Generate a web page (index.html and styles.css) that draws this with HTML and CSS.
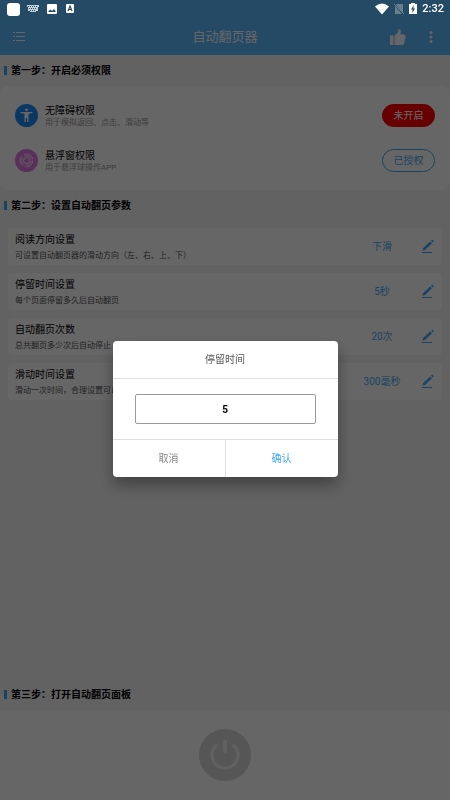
FILE: index.html
```html
<!DOCTYPE html>
<html lang="zh-CN">
<head>
<meta charset="utf-8">
<meta name="viewport" content="width=device-width, initial-scale=1">
<title>自动翻页器</title>
<link rel="stylesheet" href="styles.css">
</head>
<body>
<svg class="symbols" aria-hidden="true">
  <symbol id="pencil" viewBox="0 0 14 16">
    <path d="M2.200 9 9.200 2.500l1.800 1.800L4 11l-2.600.8zM10 1.800l.9-.9q.5-.4.9 0l.8.8q.4.500 0 .9l-.9.9z"/>
    <path d="M1 13h10v1H1z"/>
  </symbol>
</svg>
<div class="statusbar">
  <div class="notices">
    <span class="notice-app"></span>
    <svg width="12" height="12" viewBox="0 0 12 12"><path fill="#c5d0d8" d="M0 2h12v2h-1v4H9v1H3V8H1V4H0z"/><path stroke="#244a66" stroke-dasharray="1 1" d="M1 3.500h10M2 5.500h8M3 7.500h6"/></svg>
    <svg width="12" height="12" viewBox="0 0 12 12"><rect x="1" y="1" width="10" height="10" rx="1" fill="#fff"/><path fill="#244a66" d="M2.500 9V8l2-1.500L6 8l2-2 1.500 2v1z"/></svg>
    <svg width="10" height="12" viewBox="0 0 10 12"><rect x="1" y="1" width="8" height="9" rx="1" fill="#fff"/><path fill="none" stroke="#244a66" stroke-width="1.200" d="M3 8l2-5 2 5M3.600 6.500h2.800"/></svg>
  </div>
  <div class="signals">
    <svg width="14" height="12" viewBox="0 0 14 12"><path fill="#fff" d="M0 3.500Q7-2.500 14 3.500L7 11.500z"/></svg>
    <svg width="10" height="12" viewBox="0 0 10 12"><path fill="#66808f" d="M3 1h6v9L2 2zM1 3l7 8H1z"/><path stroke="#66808f" d="M0 1l10 10"/></svg>
    <svg width="8" height="12" viewBox="0 0 8 12"><path fill="#fff" d="M0 1h2V0h4v1h2v10H0z"/><path fill="#244a66" d="M4.800 2 2 6.500h1.600L3.200 10 6 5.500H4.400z"/></svg>
    <time>2:32</time>
  </div>
</div>
<div class="screen">
  <header class="topbar">
    <button class="icon-btn" aria-label="列表"><svg width="12" height="12" viewBox="0 0 12 12"><path stroke="#fff" fill="none" d="M0 1.500h2M3 1.500h9M0 5.500h2M3 5.500h9M0 9.500h2M3 9.500h9"/></svg></button>
    <h1>自动翻页器</h1>
    <div class="actions">
      <button class="icon-btn" aria-label="点赞"><svg width="16" height="18" viewBox="0 0 16 18"><path fill="#fff" d="M0 7.500h3.500V17H0zM4.500 7.500 8 4.500 8.500 1.500Q10.500.5 11 3L10.500 6.500H14Q16 7 15.500 9L14 15.500Q13.500 17 12 17H4.500z"/></svg></button>
      <button class="icon-btn" aria-label="更多"><svg width="4" height="14" viewBox="0 0 4 14"><g fill="#fff"><circle cx="2" cy="2.500" r="1.500"/><circle cx="2" cy="7" r="1.500"/><circle cx="2" cy="11.500" r="1.500"/></g></svg></button>
    </div>
  </header>
  <main>
    <h2>第一步：开启必须权限</h2>
    <section class="card">
      <div class="perm">
        <svg width="23" height="23" viewBox="0 0 23 23"><circle cx="11.500" cy="11.500" r="11.500" fill="#1b8df5"/><g fill="#fff"><circle cx="11.500" cy="5.800" r="1.400"/><path d="M5.500 8h12v1l-4 .7v8.300h-1.300v-4h-1.400v4H9.500V9.700l-4-.7z"/></g></svg>
        <div class="text"><h3>无障碍权限</h3><p>用于模拟返回、点击、滑动等</p></div>
        <button class="pill pill-off">未开启</button>
      </div>
      <div class="perm">
        <svg width="23" height="23" viewBox="0 0 23 23"><circle cx="11.500" cy="11.500" r="11.500" fill="#e375e3"/><g fill="none" stroke="#fff" stroke-width=".8"><circle cx="11.500" cy="11.500" r="3"/><circle cx="11.500" cy="11.500" r="4.700" stroke-dasharray="8 1.800"/><circle cx="11.500" cy="11.500" r="6.400" stroke-dasharray="11 2.400"/></g></svg>
        <div class="text"><h3>悬浮窗权限</h3><p>用于悬浮球操作APP</p></div>
        <button class="pill">已授权</button>
      </div>
    </section>
    <h2>第二步：设置自动翻页参数</h2>
    <section class="settings">
      <div class="row"><div class="text"><h3>阅读方向设置</h3><p>可设置自动翻页器的滑动方向（左、右、上、下）</p></div><span class="value">下滑</span><button class="icon-btn edit" aria-label="编辑"><svg width="14" height="16"><use href="#pencil"/></svg></button></div>
      <div class="row"><div class="text"><h3>停留时间设置</h3><p>每个页面停留多久后自动翻页</p></div><span class="value">5秒</span><button class="icon-btn edit" aria-label="编辑"><svg width="14" height="16"><use href="#pencil"/></svg></button></div>
      <div class="row"><div class="text"><h3>自动翻页次数</h3><p>总共翻页多少次后自动停止</p></div><span class="value">20次</span><button class="icon-btn edit" aria-label="编辑"><svg width="14" height="16"><use href="#pencil"/></svg></button></div>
      <div class="row"><div class="text"><h3>滑动时间设置</h3><p>滑动一次时间，合理设置可以</p></div><span class="value">300毫秒</span><button class="icon-btn edit" aria-label="编辑"><svg width="14" height="16"><use href="#pencil"/></svg></button></div>
    </section>
    <h2 class="last">第三步：打开自动翻页面板</h2>
  </main>
  <footer>
    <button class="power" aria-label="打开面板"><svg width="32" height="32" viewBox="0 0 32 32"><path fill="none" stroke="#fff" stroke-opacity=".7" stroke-width="3" stroke-linecap="round" d="M7 6.700a13 13 0 1 0 18 0"/><path stroke="#fff" stroke-opacity=".7" stroke-width="4" stroke-linecap="round" d="M16 3v9"/></svg></button>
  </footer>
</div>
<div class="overlay">
  <form class="dialog" role="dialog" aria-labelledby="dialog-title">
    <label id="dialog-title" for="stay">停留时间</label>
    <div class="field"><input id="stay" type="text" inputmode="numeric" value="5"></div>
    <div class="buttons"><button type="button">取消</button><button type="button" class="confirm">确认</button></div>
  </form>
</div>
</body>
</html>
```
FILE: styles.css
```css
* { box-sizing: border-box; }
body {
  margin: 0;
  font-family: Roboto, "Noto Sans CJK SC", sans-serif;
  font-size: 10px;
  line-height: 14px;
  color: #000;
  background: #f5f5f5;
}
h1, h2, h3, p { margin: 0; font-size: 10px; font-weight: 400; }
svg { display: block; }
button { font: inherit; padding: 0; border: 0; background: none; }
.symbols { position: absolute; width: 0; height: 0; }

.statusbar {
  position: absolute;
  inset: 0 0 auto;
  z-index: 2;
  display: flex;
  justify-content: space-between;
  height: 18px;
  padding: 0 6px 0 7px;
  color: #fff;
}
.notices, .signals { display: flex; align-items: center; }
.notices { gap: 7px; }
.notice-app { width: 13px; height: 13px; border-radius: 3px; background: #fff; }
.signals { gap: 5px; }
.signals time { font-size: 11px; font-weight: 500; }

.screen { min-height: 100vh; display: flex; flex-direction: column; }
.topbar {
  display: grid;
  grid-template-columns: 1fr auto 1fr;
  align-items: center;
  padding: 18px 17px 0 13px;
  height: 55px;
  color: #fff;
  background: #5ab8ff;
}
.topbar h1 { padding-left: 4px; font-size: 13px; line-height: 20px; }
.actions { display: flex; align-items: center; justify-content: flex-end; gap: 23px; }

main { flex: 1; display: flex; flex-direction: column; }
h2 {
  display: flex;
  align-items: center;
  gap: 4px;
  height: 31px;
  padding-left: 4px;
  font-weight: 700;
}
h2::before { content: ""; width: 3px; height: 9px; background: #3fa9f5; }
.last { margin-top: auto; }
.card {
  padding: 7px 15px;
  border-radius: 8px;
  background: #fff;
}
.perm { display: flex; align-items: center; gap: 7px; height: 45px; }
.text { flex: 1; }
p { font-size: 8px; line-height: 10px; color: #999; }
.pill {
  width: 53px;
  height: 23px;
  border: 1px solid #3fa9f5;
  border-radius: 12px;
  color: #3fa9f5;
}
.pill-off { border-color: #f00; color: #fff; background: #f00; }

.settings { display: grid; gap: 8px; padding: 7px 8px; }
.row {
  display: flex;
  align-items: center;
  height: 37px;
  padding: 0 7px;
  border-radius: 4px;
  background: #fff;
}
.row p { margin-top: 4px; color: #555; }
.value { width: 60px; text-align: center; color: #3fa9f5; }
.edit { margin-left: 9px; fill: #3fa9f5; }

footer { display: grid; place-items: center; height: 90px; background: #fff; }
.power {
  display: grid;
  place-items: center;
  width: 52px;
  height: 52px;
  border-radius: 50%;
  background: #d8d8d8;
}

.overlay {
  position: fixed;
  inset: 0;
  z-index: 1;
  display: grid;
  place-items: center;
  padding-top: 18px;
  background: rgba(0, 0, 0, .6);
}
.dialog {
  width: 50%;
  border-radius: 4px;
  background: #fff;
  box-shadow: 0 8px 16px rgba(0, 0, 0, .35);
}
.dialog label { display: block; line-height: 37px; text-align: center; color: #555; }
.field { padding: 15px 22px; border: solid #ddd; border-width: 1px 0; }
.field input {
  display: block;
  width: 100%;
  height: 30px;
  border: 1px solid #999;
  border-radius: 2px;
  font: inherit;
  font-weight: 700;
  text-align: center;
}
.buttons { display: flex; }
.buttons button { flex: 1; height: 37px; border-right: 1px solid #ddd; color: #888; }
.buttons .confirm { border: 0; color: #3fa9f5; }
```
